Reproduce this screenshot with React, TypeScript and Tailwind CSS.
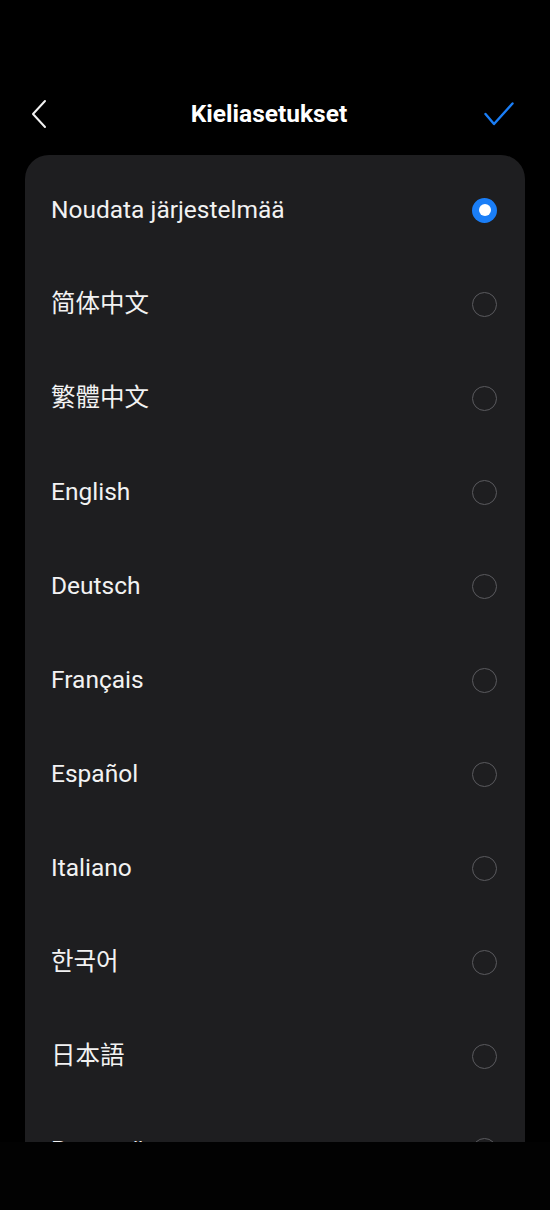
const languages = [
  'Noudata järjestelmää',
  '简体中文',
  '繁體中文',
  'English',
  'Deutsch',
  'Français',
  'Español',
  'Italiano',
  '한국어',
  '日本語',
  'Русский',
];

function Radio({ checked }: { checked: boolean }) {
  if (checked) {
    return (
      <span className="flex h-[25px] w-[25px] items-center justify-center rounded-full bg-[#1a7ef7]">
        <span className="h-[12px] w-[12px] rounded-full bg-white" />
      </span>
    );
  }
  return <span className="h-[25px] w-[25px] rounded-full border-[1.5px] border-[#5a5a5e]" />;
}

export default function App() {
  const selected = 0;
  return (
    <div
      className="flex h-[1210px] w-[550px] flex-col bg-black text-[#f2f2f2]"
      style={{ fontFamily: 'Roboto, "Noto Sans CJK SC", "Noto Sans CJK KR", "Noto Sans CJK JP", sans-serif' }}
    >
      {/* header */}
      <div className="relative mt-[88px] flex h-[52px] items-center justify-center pr-[12px]">
        <button className="absolute left-[27px] top-[7px] p-1">
          <svg width="18" height="30" viewBox="0 0 18 30" fill="none" stroke="#f2f2f2" strokeWidth="2" strokeLinecap="round" strokeLinejoin="round">
            <path d="M14 2 L2 15 L14 28" />
          </svg>
        </button>
        <h1 className="text-[24.5px] font-bold text-white">Kieliasetukset</h1>
        <button className="absolute right-[36px] top-[14px]">
          <svg width="30" height="24" viewBox="0 0 30 24" fill="none" stroke="#1a7ef7" strokeWidth="2.4" strokeLinecap="round" strokeLinejoin="round">
            <path d="M1.5 12 L10 22 L28.5 1.5" />
          </svg>
        </button>
      </div>

      {/* list card, clipped by the bottom bar */}
      <div className="mx-[25px] mt-[15px] h-[987px] overflow-hidden rounded-t-[24px] bg-[#1e1e20]">
        <ul className="pt-[8px]">
          {languages.map((name, i) => (
            <li key={name} className="flex h-[94px] items-center justify-between pl-[26px] pr-[28px]">
              <span className="text-[24.5px] leading-none">{name}</span>
              <Radio checked={i === selected} />
            </li>
          ))}
        </ul>
      </div>
      <div className="flex-1 bg-[#020202]" />
    </div>
  );
}
